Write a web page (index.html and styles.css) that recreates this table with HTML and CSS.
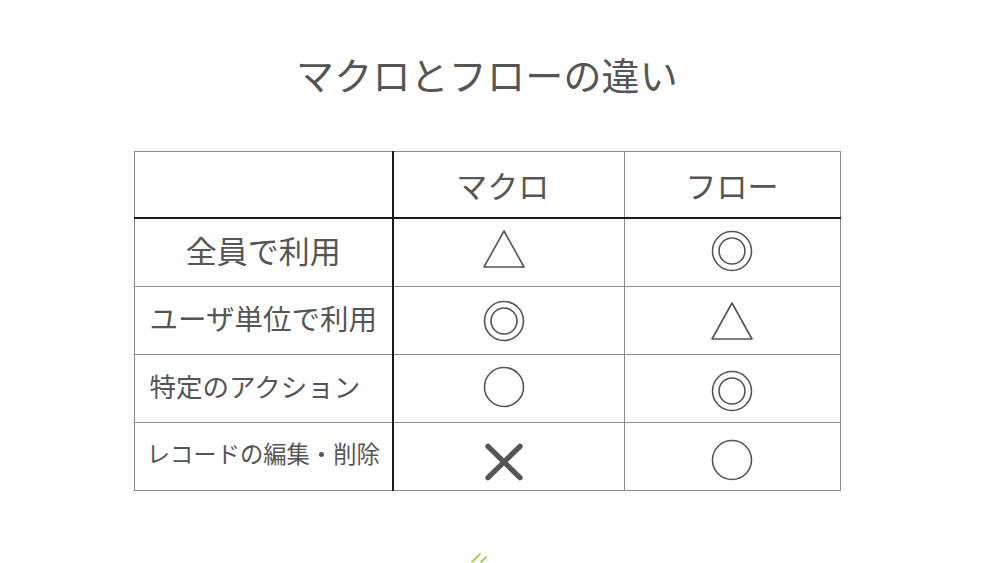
FILE: index.html
```html
<!DOCTYPE html>
<html lang="ja">
<head>
<meta charset="utf-8">
<link rel="stylesheet" href="styles.css">
</head>
<body>
<main class="page">
  <h1 class="title">マクロとフローの違い</h1>
  <table class="compare">
    <colgroup>
      <col class="c1"><col class="c2"><col class="c3">
    </colgroup>
    <thead>
      <tr class="head">
        <th class="label"></th>
        <th class="mid">マクロ</th>
        <th>フロー</th>
      </tr>
    </thead>
    <tbody>
      <tr>
        <td class="label l1">全員で利用</td>
        <td class="mid"><svg class="mark n4" viewBox="0 0 44 44"><polygon points="22,4 42,40 2,40" fill="none" stroke="#555" stroke-width="1.6" stroke-linejoin="round"/></svg></td>
        <td><svg class="mark n2" viewBox="0 0 44 44"><circle cx="22" cy="22" r="19.5" fill="none" stroke="#555" stroke-width="1.6"/><circle cx="22" cy="22" r="13" fill="none" stroke="#555" stroke-width="1.6"/></svg></td>
      </tr>
      <tr>
        <td class="label l2">ユーザ単位で利用</td>
        <td class="mid"><svg class="mark" viewBox="0 0 44 44"><circle cx="22" cy="22" r="19.5" fill="none" stroke="#555" stroke-width="1.6"/><circle cx="22" cy="22" r="13" fill="none" stroke="#555" stroke-width="1.6"/></svg></td>
        <td><svg class="mark" viewBox="0 0 44 44"><polygon points="22,4 42,40 2,40" fill="none" stroke="#555" stroke-width="1.6" stroke-linejoin="round"/></svg></td>
      </tr>
      <tr>
        <td class="label l3">特定のアクション</td>
        <td class="mid"><svg class="mark n2" viewBox="0 0 44 44"><circle cx="22" cy="22" r="19.5" fill="none" stroke="#555" stroke-width="1.6"/></svg></td>
        <td><svg class="mark p2" viewBox="0 0 44 44"><circle cx="22" cy="22" r="19.5" fill="none" stroke="#555" stroke-width="1.6"/><circle cx="22" cy="22" r="13" fill="none" stroke="#555" stroke-width="1.6"/></svg></td>
      </tr>
      <tr>
        <td class="label l4">レコードの編集・削除</td>
        <td class="mid"><svg class="mark p5" viewBox="0 0 44 44"><path d="M6 6.3 L38 37.7 M38 6.3 L6 37.7" stroke="#555" stroke-width="5.3" stroke-linecap="round"/></svg></td>
        <td><svg class="mark p3" viewBox="0 0 44 44"><circle cx="22" cy="22" r="19.5" fill="none" stroke="#555" stroke-width="1.6"/></svg></td>
      </tr>
    </tbody>
  </table>
  <div class="deco">
    <svg viewBox="0 0 18 11" width="18" height="11"><path d="M1 10 L9 2 M10 10 L15 5" stroke="#7fd321" stroke-width="1.6" stroke-linecap="round"/></svg>
  </div>
</main>
</body>
</html>
```

FILE: styles.css
```css
html, body {
  margin: 0;
  padding: 0;
  background: #ffffff;
}
body {
  width: 1000px;
  height: 563px;
  overflow: hidden;
  font-family: "Noto Sans CJK JP", "Noto Sans", sans-serif;
  color: #555555;
}
.page {
  width: 974px;
  display: flex;
  flex-direction: column;
  align-items: center;
}
.title {
  margin: 52px 0 0;
  font-size: 38px;
  line-height: 44px;
  font-weight: 400;
  letter-spacing: 0.2px;
  color: #555555;
}
.compare {
  margin-top: 55px;
  border-collapse: collapse;
  border: 1px solid #9a9a9a;
  table-layout: fixed;
  width: 706px;
}
.c1 { width: 259px; }
.c2 { width: 231px; }
.c3 { width: 216px; }
.compare th,
.compare td {
  border: 1px solid #8c8c8c;
  padding: 0;
  text-align: center;
  vertical-align: middle;
  font-weight: 400;
  color: #555555;
}
.compare .mid {
  padding-right: 10px;
}
.compare .head th {
  height: 65px;
  font-size: 31px;
  line-height: 40px;
  border-bottom: 2px solid #1a1a1a;
}
.compare .head th.mid {
  padding-right: 12px;
}
.compare tbody td {
  height: 67px;
}
.compare .label {
  border-right: 2px solid #1a1a1a;
  white-space: nowrap;
}
.compare tbody td.label {
  padding-bottom: 7px;
  height: 60px;
}
.l1 { font-size: 31px; }
.l2 { font-size: 28.5px; }
.compare tbody td.l3 {
  font-size: 26.5px;
  text-align: left;
  padding-left: 15px;
}
.l4 { font-size: 23.3px; }
.mark {
  display: block;
  width: 44px;
  height: 44px;
  margin: 0 auto;
}
.mark.n4 { transform: translateY(-4px); }
.mark.n2 { transform: translateY(-2px); }
.mark.p2 { transform: translateY(2px); }
.mark.p3 { transform: translateY(3px); }
.mark.p5 { transform: translateY(5px); }
.deco {
  margin-top: 61px;
  height: 11px;
  width: 18px;
  margin-right: 14px;
}
.deco svg { display: block; }
```
